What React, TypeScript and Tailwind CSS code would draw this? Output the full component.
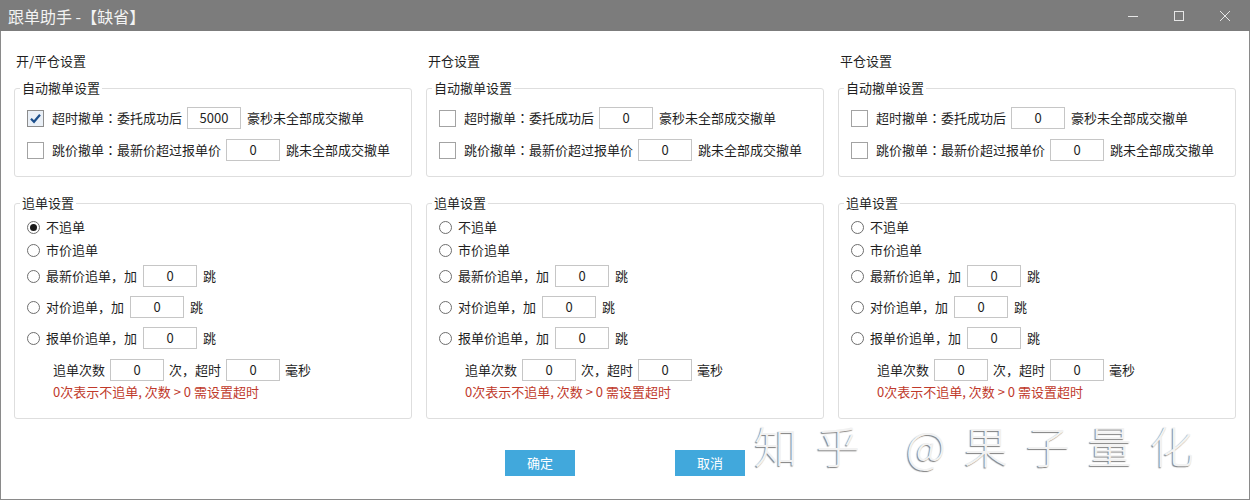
import React from "react";

const FONT = "font-['Microsoft_YaHei','Noto_Sans_CJK_SC','Noto_Sans',sans-serif]";

function Box({ value }: { value: string }) {
  return (
    <div className="w-[54px] h-[22px] border border-[#c6c6c6] bg-white flex items-center justify-center text-[13px] text-[#1f1f1f]">
      {value}
    </div>
  );
}

function Check({ checked }: { checked?: boolean }) {
  return checked ? (
    <div className="w-[17px] h-[17px] border border-[#8c8c8c] bg-[#eaf0f7] flex items-center justify-center">
      <svg width="13" height="13" viewBox="0 0 13 13">
        <path d="M2 6.8 L5 9.8 L11 2.8" fill="none" stroke="#1c4f8c" strokeWidth="2.2" />
      </svg>
    </div>
  ) : (
    <div className="w-[17px] h-[17px] border border-[#a3a3a3] bg-white" />
  );
}

function Radio({ on }: { on?: boolean }) {
  return (
    <div className="w-[13px] h-[13px] rounded-full border border-[#6e6e6e] bg-white flex items-center justify-center">
      {on && <div className="w-[7px] h-[7px] rounded-full bg-[#1a1a1a]" />}
    </div>
  );
}

// centred full-width colon, like the Windows UI font draws it
function Colon() {
  return <span className="font-['Noto_Sans_CJK_TC',sans-serif]">：</span>;
}

function Group({ title, children, className }: { title: string; children: React.ReactNode; className?: string }) {
  return (
    <fieldset className={`border border-[#dedede] rounded-[3px] px-0 m-0 min-w-0 ${className ?? ""}`}>
      <legend className="ml-[5px] px-[2px] h-[18px] leading-[18px] text-[13px] text-[#1f1f1f]">{title}</legend>
      {children}
    </fieldset>
  );
}

type ColumnProps = {
  title: string;
  timeoutChecked?: boolean;
  timeoutValue: string;
  firstRadio?: boolean;
};

function Column({ title, timeoutChecked, timeoutValue, firstRadio }: ColumnProps) {
  return (
    <div className="flex flex-col">
      <div className="h-[18px] leading-[18px] text-[13px] text-[#1f1f1f] pl-[2px]">{title}</div>

      <Group title="自动撤单设置" className="mt-[9px] pt-[10px] pb-[15px]">
        <div className="flex flex-col gap-[10px] pl-[12px]">
          <div className="flex items-center gap-[5px] text-[13px] text-[#1f1f1f]">
            <Check checked={timeoutChecked} />
            <span className="ml-[3px]">
              超时撤单<Colon />委托成功后
            </span>
            <Box value={timeoutValue} />
            <span className="ml-[1px]">豪秒未全部成交撤单</span>
          </div>
          <div className="flex items-center gap-[5px] text-[13px] text-[#1f1f1f]">
            <Check />
            <span className="ml-[3px]">
              跳价撤单<Colon />最新价超过报单价
            </span>
            <Box value="0" />
            <span className="ml-[1px]">跳未全部成交撤单</span>
          </div>
        </div>
      </Group>

      <Group title="追单设置" className="mt-[17px] pt-[5px] pb-[17px]">
        <div className="flex flex-col pl-[12px] text-[13px] text-[#1f1f1f]">
          <div className="h-[20px] flex items-center gap-[6px]">
            <Radio on={firstRadio} />
            <span>不追单</span>
          </div>
          <div className="h-[20px] mt-[3px] flex items-center gap-[6px]">
            <Radio />
            <span>市价追单</span>
          </div>
          <div className="mt-[5px] flex items-center gap-[6px]">
            <Radio />
            <span>最新价追单，加</span>
            <Box value="0" />
            <span>跳</span>
          </div>
          <div className="mt-[9px] flex items-center gap-[6px]">
            <Radio />
            <span>对价追单，加</span>
            <Box value="0" />
            <span>跳</span>
          </div>
          <div className="mt-[9px] flex items-center gap-[6px]">
            <Radio />
            <span>报单价追单，加</span>
            <Box value="0" />
            <span>跳</span>
          </div>
          <div className="mt-[10px] pl-[26px] flex items-center gap-[5px]">
            <span>追单次数</span>
            <Box value="0" />
            <span>次，超时</span>
            <Box value="0" />
            <span>毫秒</span>
          </div>
          <div className="mt-[2px] pl-[26px] h-[18px] leading-[18px] text-[#c0392b]">
            0次表示不追单, 次数 &gt; 0 需设置超时
          </div>
        </div>
      </Group>
    </div>
  );
}

export default function App() {
  return (
    <div className={`w-[1250px] h-[500px] flex flex-col bg-white ${FONT}`}>
      <div className="h-[31px] bg-[#7c7c7c] flex items-center justify-between shrink-0">
        <span className="pl-[8px] text-[16px] text-[#f3f3f3]">跟单助手 -【缺省】</span>
        <div className="flex items-center h-full">
          <div className="w-[46px] h-full flex items-center justify-center">
            <svg width="12" height="12" viewBox="0 0 12 12">
              <path d="M1 6.5 H11" stroke="#e6e6e6" strokeWidth="1" />
            </svg>
          </div>
          <div className="w-[46px] h-full flex items-center justify-center">
            <svg width="12" height="12" viewBox="0 0 12 12">
              <rect x="1.5" y="1.5" width="9" height="9" fill="none" stroke="#e6e6e6" strokeWidth="1" />
            </svg>
          </div>
          <div className="w-[46px] h-full flex items-center justify-center mr-[2px]">
            <svg width="12" height="12" viewBox="0 0 12 12">
              <path d="M1 1 L11 11 M11 1 L1 11" stroke="#e6e6e6" strokeWidth="1" />
            </svg>
          </div>
        </div>
      </div>

      <div className="relative flex-1 border-l border-r border-b border-[#8a8a8a] flex flex-col">
        <div className="grid grid-cols-[398px_398px_398px] gap-[14px] pl-[13px] pt-[21px]">
          <Column title="开/平仓设置" timeoutChecked timeoutValue="5000" firstRadio />
          <Column title="开仓设置" timeoutValue="0" />
          <Column title="平仓设置" timeoutValue="0" />
        </div>

        <div className="flex gap-[100px] pl-[504px] mt-[31px]">
          <button className="w-[70px] h-[26px] bg-[#41a8dc] text-white text-[13px]">确定</button>
          <button className="w-[70px] h-[26px] bg-[#41a8dc] text-white text-[13px]">取消</button>
        </div>

        {/* watermark laid over the dialog */}
        <div className="absolute left-[753px] top-[388px] text-[44px] font-light leading-[52px] text-[#f2f2f2] tracking-[18px] whitespace-nowrap [text-shadow:-1px_1px_1px_#808080] pointer-events-none">
          知乎 @果子量化
        </div>
      </div>
    </div>
  );
}
